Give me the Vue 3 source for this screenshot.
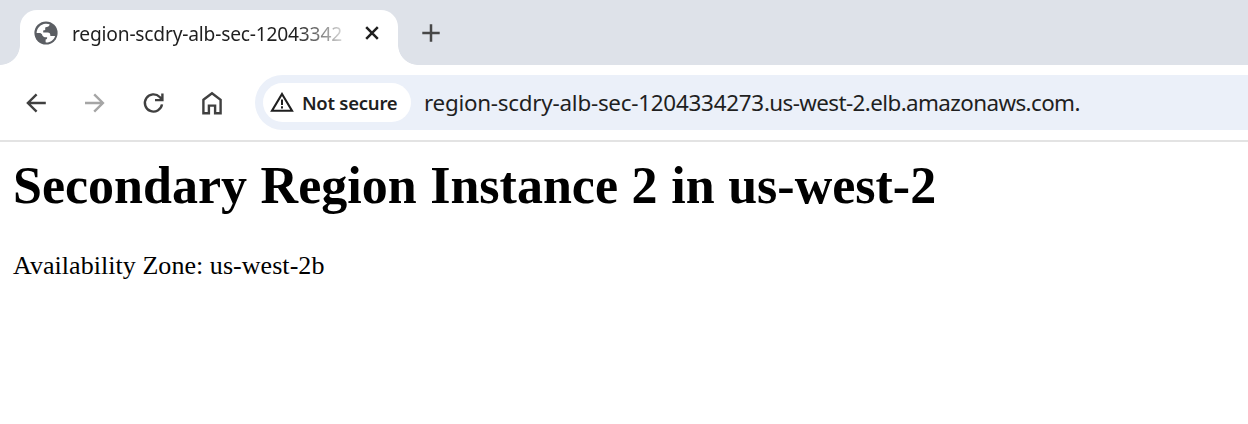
<script setup>
const loadBalancer = 'region-scdry-alb-sec-1204334273'
const domain = '.us-west-2.elb.amazonaws.com.'
const tabTitle = 'region-scdry-alb-sec-12043342'
</script>

<template>
  <div class="browser">
    <header class="strip">
      <div class="tab">
        <svg class="globe" viewBox="0 0 24 24">
          <circle cx="12" cy="12" r="11.6" fill="#5b5e63" />
          <path
            d="M2.6 11.9C2.8 7 6.6 3 11.5 2.7C13 2.6 14.4 2.8 15.6 3.3C15.4 5 14.4 5.9 12.6 6.1L11.2 6.5V8.9L9.2 9.6V11.6H13.6C15.6 11.6 16.4 12.8 16.4 14.9H21.1C19.9 18.9 16.5 21.4 12.4 21.4L11.6 21.3V18.6C13 18.2 13.3 17.4 13.1 16.3C10 16.5 8.2 15.3 8 13.2L6.3 11.9Z"
            fill="#fff"
          />
        </svg>
        <span class="title">{{ tabTitle }}</span>
        <svg class="close" viewBox="0 0 14 14"><path d="M1.2 1.2 12.8 12.8M12.8 1.2 1.2 12.8" /></svg>
      </div>
      <svg class="plus" viewBox="0 0 18 18"><path d="M9 .3V17.7M.3 9H17.7" /></svg>
    </header>

    <nav class="toolbar">
      <svg class="nav" viewBox="0 0 24 24"><path d="M21.8 12H4M12.6 3.3 3.9 12 12.6 20.7" /></svg>
      <svg class="nav dim" viewBox="0 0 24 24"><path d="M2 12H19.8M11.2 3.3 19.9 12 11.2 20.7" /></svg>
      <svg class="nav" viewBox="0 0 24 24">
        <path d="M21 13.4A8.6 8.6 0 1 1 18.7 6L20.9 8.3M21.4 2.6V9.1H14" />
      </svg>
      <svg class="nav" viewBox="0 0 24 24"><path d="M3.4 8.8 12 2.2 20.6 8.8V22.2H15.1V14.6H8.9V22.2H3.4Z" /></svg>
      <div class="omnibox">
        <div class="chip">
          <svg class="warn" viewBox="0 0 24 20">
            <path d="M12 2 22 18.7H2Z" fill="none" stroke="#1f1f1f" stroke-width="2.1" />
            <path d="M12 7.5V13M12 14.3V16.5" stroke="#1f1f1f" stroke-width="2" />
          </svg>
          <span>Not secure</span>
        </div>
        <span class="url"><span class="lb">{{ loadBalancer }}</span><span class="domain">{{ domain }}</span></span>
      </div>
    </nav>

    <main>
      <h1>Secondary Region Instance 2 in us-west-2</h1>
      <p>Availability Zone: us-west-2b</p>
    </main>
  </div>
</template>

<style>
body { background: #fff; }
</style>

<style scoped>
.browser { height: 424px; overflow: hidden; background: #fff; font-family: "Noto Sans", "Open Sans", sans-serif; }
.strip { display: flex; height: 65px; background: #dee2e9; padding: 10px 0 0 20px; box-sizing: border-box; }
.tab {
  position: relative; width: 378px; height: 55px; box-sizing: border-box; background: #fff;
  border-radius: 17px 17px 0 0; display: flex; align-items: center; padding: 0 19px 8px 13.5px;
}
.tab::before, .tab::after { content: ""; position: absolute; bottom: 0; width: 20px; height: 20px; }
.tab::before { left: -20px; background: radial-gradient(circle at 0 0, transparent 19.5px, #fff 20.2px); }
.tab::after { right: -20px; background: radial-gradient(circle at 100% 0, transparent 19.5px, #fff 20.2px); }
.globe { width: 24px; height: 24px; margin: -2px 14.5px 0 0; flex: none; }
.title {
  width: 273px; flex: none; white-space: nowrap; font-size: 19.2px; letter-spacing: -0.2px; color: #1f1f1f;
  line-height: 28px;
  -webkit-mask-image: linear-gradient(90deg, #000 225px, transparent 280px);
  mask-image: linear-gradient(90deg, #000 225px, transparent 280px);
}
.close { width: 14px; height: 14px; margin: -2px 0 0 auto; }
.close path { fill: none; stroke: #1f1f1f; stroke-width: 2.5; }
.plus { width: 18px; height: 18px; margin: 14px 0 0 23.7px; }
.plus path { fill: none; stroke: #474747; stroke-width: 2.5; }
.toolbar {
  display: flex; align-items: center; height: 77px; box-sizing: border-box; padding: 0 0 1px 24px;
  border-bottom: 2px solid #e3e3e3;
}
.nav { width: 24px; height: 24px; flex: none; margin: 1px 34.7px 0 0; }
.nav path { fill: none; stroke: #404040; stroke-width: 2.4; }
.dim path { stroke: #a5a5a5; }
.omnibox {
  flex: 1; height: 55px; margin-left: -3.8px; background: #ebf0f9; border-radius: 27.5px 0 0 27.5px;
  display: flex; align-items: center; padding-left: 8px; box-sizing: border-box;
}
.chip {
  width: 148px; height: 39px; border-radius: 20px; background: #fff; display: flex; align-items: center;
  padding-left: 7px; box-sizing: border-box; font-size: 18.5px; font-weight: 600; letter-spacing: -0.25px;
  color: #1f1f1f; white-space: nowrap;
}
.warn { width: 24px; height: 20px; margin-right: 8px; flex: none; }
.url { margin-left: 13px; font-size: 22.4px; color: #1f1f1f; white-space: nowrap; }
.lb { letter-spacing: -0.24px; }
.domain { letter-spacing: -0.59px; }
main { padding-left: 13px; font-family: "Liberation Serif", "Times New Roman", serif; color: #000; }
h1 { margin: 0; padding-top: 14px; font-size: 52px; word-spacing: 0.6px; line-height: 60px; white-space: nowrap; }
p { margin: 0; padding-top: 35px; font-size: 26px; letter-spacing: 0.05px; line-height: 30px; }
</style>
